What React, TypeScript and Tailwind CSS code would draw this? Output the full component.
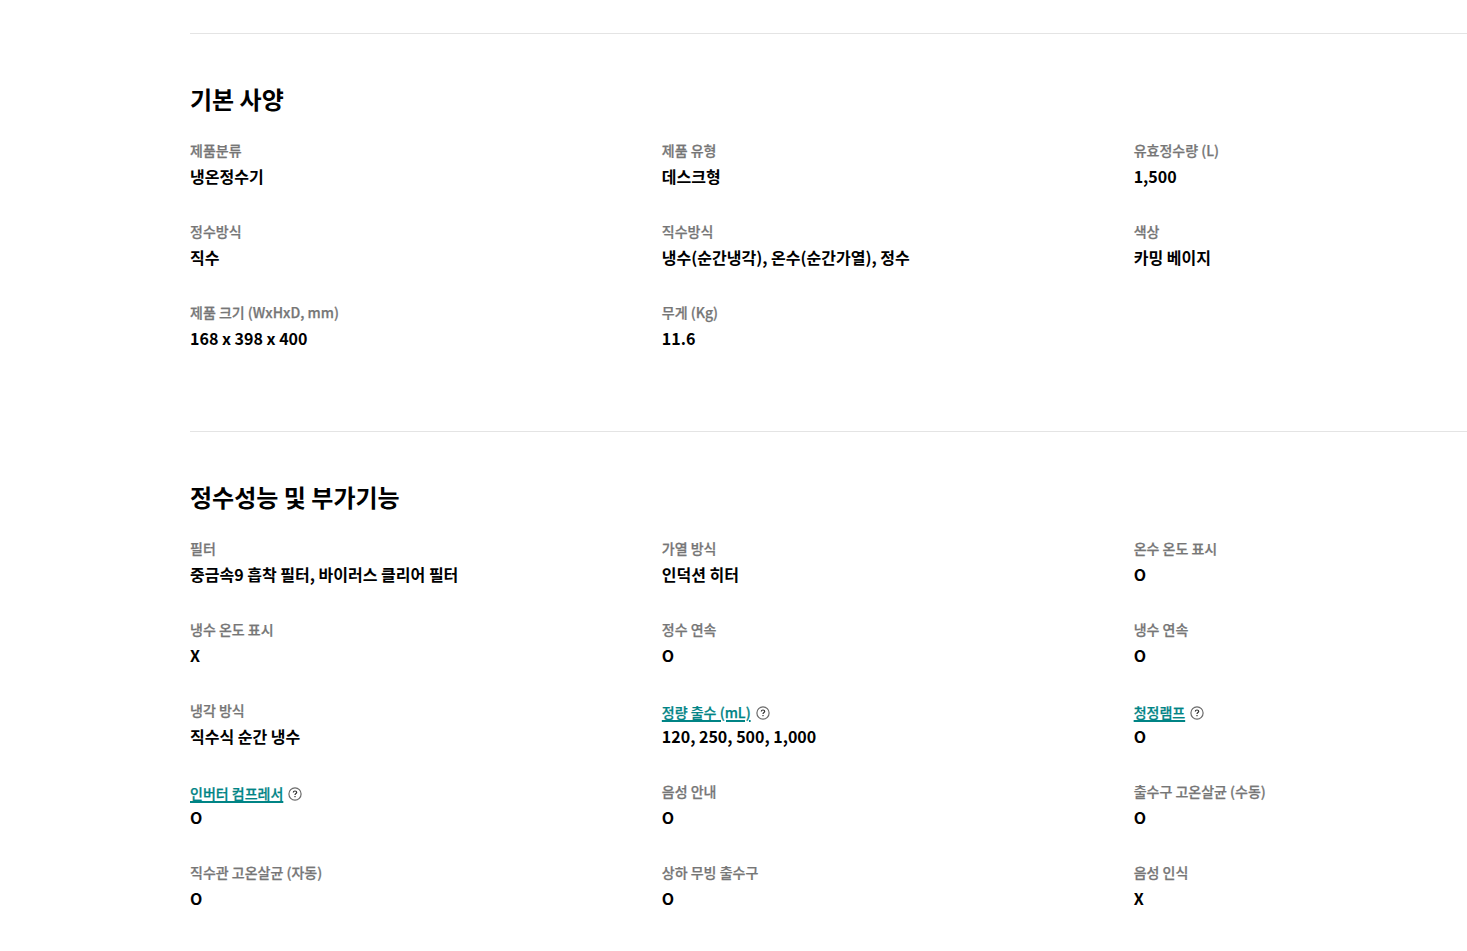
const FONT = "font-['Noto_Sans_CJK_KR','Noto_Sans',sans-serif]";

type Item = { label: string; value: string; link?: boolean };

const basic: Item[] = [
  { label: "제품분류", value: "냉온정수기" },
  { label: "제품 유형", value: "데스크형" },
  { label: "유효정수량 (L)", value: "1,500" },
  { label: "정수방식", value: "직수" },
  { label: "직수방식", value: "냉수(순간냉각), 온수(순간가열), 정수" },
  { label: "색상", value: "카밍 베이지" },
  { label: "제품 크기 (WxHxD, mm)", value: "168 x 398 x 400" },
  { label: "무게 (Kg)", value: "11.6" },
];

const perf: Item[] = [
  { label: "필터", value: "중금속9 흡착 필터, 바이러스 클리어 필터" },
  { label: "가열 방식", value: "인덕션 히터" },
  { label: "온수 온도 표시", value: "O" },
  { label: "냉수 온도 표시", value: "X" },
  { label: "정수 연속", value: "O" },
  { label: "냉수 연속", value: "O" },
  { label: "냉각 방식", value: "직수식 순간 냉수" },
  { label: "정량 출수 (mL)", value: "120, 250, 500, 1,000", link: true },
  { label: "청정램프", value: "O", link: true },
  { label: "인버터 컴프레서", value: "O", link: true },
  { label: "음성 안내", value: "O" },
  { label: "출수구 고온살균 (수동)", value: "O" },
  { label: "직수관 고온살균 (자동)", value: "O" },
  { label: "상하 무빙 출수구", value: "O" },
  { label: "음성 인식", value: "X" },
];

function Help() {
  return (
    <svg width="14" height="14" viewBox="0 0 14 14" fill="none" className="mt-[2px] ml-[5px] shrink-0">
      <circle cx="7" cy="7" r="6.1" stroke="#6b6b6b" strokeWidth="1.2" />
      <path d="M5.3 5.6C5.3 4.6 6.1 4 7 4C7.9 4 8.7 4.6 8.7 5.4C8.7 6.5 7 6.6 7 7.9" stroke="#333" strokeWidth="1.2" />
      <rect x="6.4" y="9" width="1.2" height="1.2" fill="#333" />
    </svg>
  );
}

function Cell({ item }: { item: Item }) {
  return (
    <div className="h-[81px]">
      {item.link ? (
        <div className="flex h-[24px] items-center pt-[4px]">
          <span className="text-[14px] leading-[24px] font-medium text-[#008485] underline decoration-[1.5px] underline-offset-2 [-webkit-text-stroke:0.25px_#008485]">{item.label}</span>
          <Help />
        </div>
      ) : (
        <div className="flex h-[24px] items-center">
          <span className="text-[14px] leading-[24px] font-medium text-[#767676] [-webkit-text-stroke:0.25px_#767676]">{item.label}</span>
        </div>
      )}
      <div className="text-[16px] leading-[28px] font-bold text-black">{item.value}</div>
    </div>
  );
}

function Section({ title, items, bottom }: { title: string; items: Item[]; bottom: string }) {
  return (
    <section className={`border-t border-[#e4e4e4] pt-[45px] ${bottom}`}>
      <h2 className="text-[24px] leading-[40px] font-bold text-black">{title}</h2>
      <div className="mt-[19px] grid w-[1415.5px] grid-cols-3">
        {items.map((it) => (
          <Cell key={it.label} item={it} />
        ))}
      </div>
    </section>
  );
}

export default function App() {
  return (
    <div className={`${FONT} h-[951px] overflow-hidden bg-white pt-[33px] pl-[190px]`}>
      <Section title="기본 사양" items={basic} bottom="pb-[50px]" />
      <Section title="정수성능 및 부가기능" items={perf} bottom="" />
    </div>
  );
}
